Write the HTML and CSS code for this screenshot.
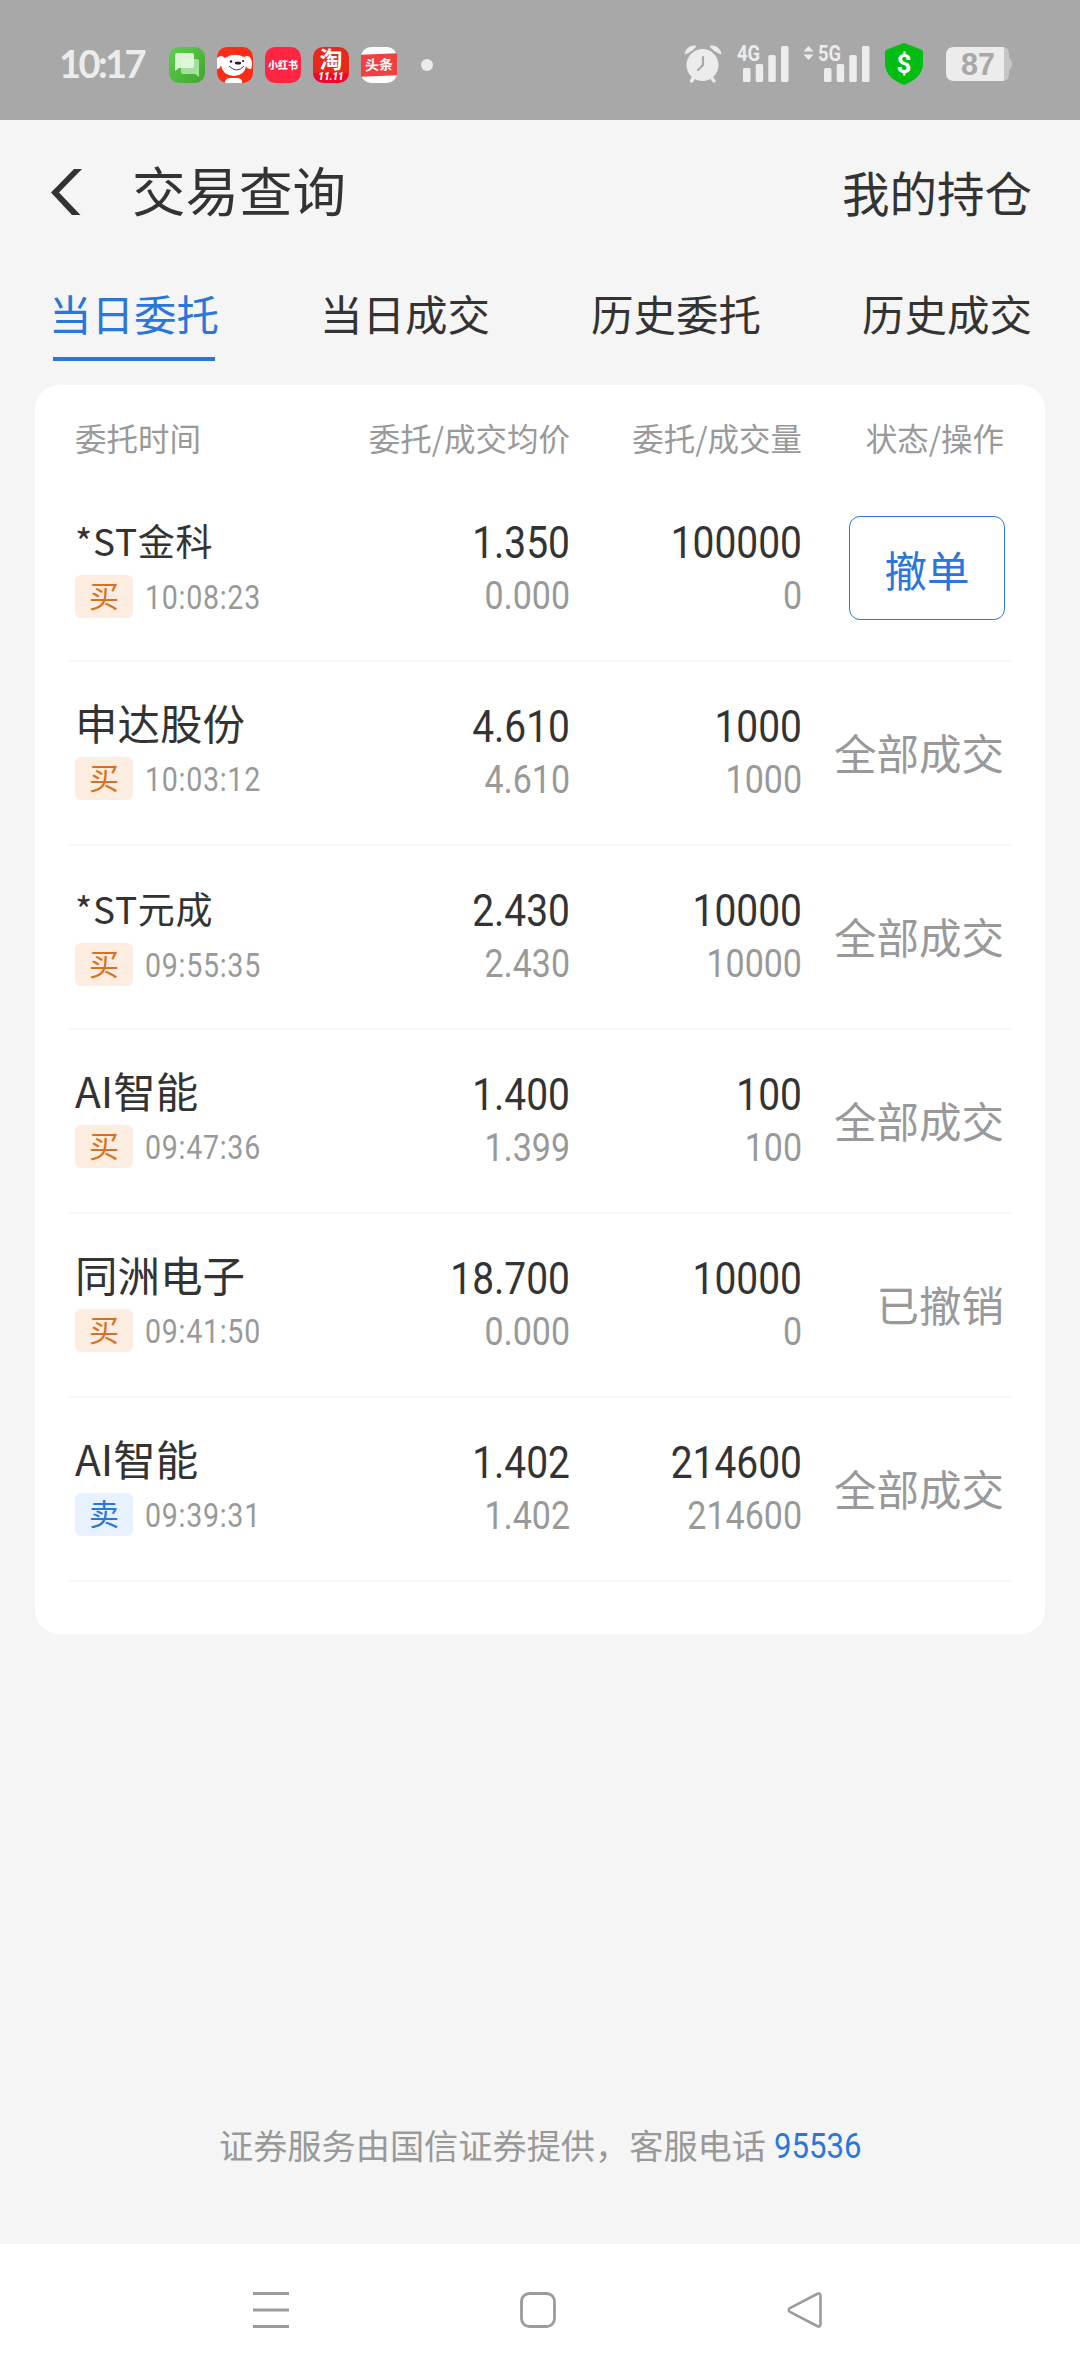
FILE: index.html
```html
<!DOCTYPE html>
<html lang="zh-CN">
<head>
    <meta charset="UTF-8">
    <meta name="viewport" content="width=device-width, initial-scale=1.0">
    <title>交易查询</title>
    <link rel="stylesheet" href="styles.css">
</head>
<body>

    <div class="status-bar">
        <span class="clock">10:17</span>
        <div class="apps">
            <!-- messages -->
            <svg width="36" height="36" viewBox="0 0 36 36">
                <defs>
                    <linearGradient id="msg" x1="0" y1="0" x2="1" y2="1">
                        <stop offset="0" stop-color="#5fd050"/>
                        <stop offset="1" stop-color="#3fa52c"/>
                    </linearGradient>
                </defs>
                <rect width="36" height="36" rx="10" fill="url(#msg)"/>
                <path d="M14 12h14q2 0 2 2v16l-4-3H14q-2 0-2-2V14q0-2 2-2z" fill="#a5df9d"/>
                <path d="M8 6h15q2 0 2 2v11q0 2-2 2H10l-4 3V8q0-2 2-2z" fill="#e2f8df" fill-opacity=".93"/>
            </svg>
            <!-- dog -->
            <svg width="36" height="36" viewBox="0 0 36 36">
                <rect width="36" height="36" rx="10" fill="#fc2c17"/>
                <path d="M0 11Q4 7 8 11Q17 5 27 10Q32 7 34 12Q36 17 34 22Q30 22 29 19Q28 28 17 29Q5 28 4 18Q3 22 0 22z" fill="#fff"/>
                <path d="M8 36Q8 31 13 31H21Q26 32 25 36z" fill="#fff"/>
                <ellipse cx="21" cy="16" rx="3.2" ry="1.5" fill="#222"/>
                <circle cx="14" cy="14.5" r="1.3" fill="#222"/>
                <circle cx="26" cy="14" r="1.1" fill="#222"/>
                <path d="M12 19Q20 27 27 19" fill="none" stroke="#333" stroke-width=".9"/>
            </svg>
            <div class="app app-red">小红书</div>
            <div class="app app-tao"><span class="tao">淘</span><span class="sale">11.11</span></div>
            <div class="app app-news"><span>头条</span></div>
        </div>
        <span class="dot"></span>

        <div class="indicators">
            <!-- alarm -->
            <svg class="alarm" width="38" height="40" viewBox="0 0 38 40">
                <g stroke="#ececec" stroke-width="3.4" stroke-linecap="round">
                    <path d="M10 33L7.5 37M27 33L30 37"/>
                </g>
                <path d="M1 10Q3 1 12 2Q10 6 1 10zM37 10Q35 1 26 2Q28 6 37 10z" fill="#ececec" stroke="#ececec" stroke-linejoin="round"/>
                <circle cx="18.5" cy="21" r="16" fill="#ececec"/>
                <path d="M19 13V21L14 26" fill="none" stroke="#a8a8a8" stroke-width="2.2" stroke-linecap="round"/>
            </svg>
            <svg class="signal" width="52" height="40" viewBox="0 0 52 40">
                <text x="0" y="17" class="net" textLength="23" lengthAdjust="spacingAndGlyphs">4G</text>
                <g fill="#ececec">
                    <rect x="6" y="24" width="7.5" height="14" rx="1.5"/>
                    <rect x="18.7" y="20" width="7.5" height="18" rx="1.5"/>
                    <rect x="31.3" y="11" width="7.5" height="27" rx="1.5"/>
                    <rect x="44" y="2" width="7.5" height="36" rx="1.5"/>
                </g>
            </svg>
            <svg class="signal-data" width="68" height="40" viewBox="0 0 68 40">
                <path d="M5.5 2L10.5 7.5H.5zM5.5 16L.5 10.5H10.5z" fill="#ececec"/>
                <text x="15" y="17" class="net" textLength="23" lengthAdjust="spacingAndGlyphs">5G</text>
                <g fill="#ececec">
                    <rect x="21" y="24" width="7.5" height="14" rx="1.5"/>
                    <rect x="33.7" y="20" width="7.5" height="18" rx="1.5"/>
                    <rect x="46.3" y="11" width="7.5" height="27" rx="1.5"/>
                    <rect x="59" y="2" width="7.5" height="36" rx="1.5"/>
                </g>
            </svg>
            <svg class="shield" width="38" height="42" viewBox="0 0 38 42">
                <path d="M19 0L36 6.5Q38 7.2 38 9V22Q37 35 19 42Q1 35 0 22V9Q0 7.2 2 6.5z" fill="#03bd13"/>
                <text x="19" y="30" class="dollar" text-anchor="middle">$</text>
            </svg>
            <svg width="66" height="34" viewBox="0 0 66 34">
                <path d="M56 0Q63 0 63 7V11Q66 12 66 17Q66 22 63 23V27Q63 34 56 34z" fill="#c6c6c6"/>
                <path d="M8 0H58V34H8Q0 34 0 26V8Q0 0 8 0z" fill="#ececec"/>
                <text x="15" y="28" class="battery" textLength="34" lengthAdjust="spacingAndGlyphs">87</text>
            </svg>
        </div>
    </div>

    <div class="header">
        <svg class="back" width="32" height="48" viewBox="0 0 32 48">
            <path d="M24 1H32L9 24.5L30.5 47H22L1 24.5z" fill="#333"/>
        </svg>
        <h1>交易查询</h1>
        <span class="holdings">我的持仓</span>
    </div>

    <div class="tabs">
        <div class="tab active">当日委托</div>
        <div class="tab">当日成交</div>
        <div class="tab">历史委托</div>
        <div class="tab">历史成交</div>
    </div>

    <div class="card">
        <div class="row head">
            <span>委托时间</span>
            <span>委托/成交均价</span>
            <span>委托/成交量</span>
            <span>状态/操作</span>
        </div>

        <div class="row">
            <div class="stock small">
                <div class="name">*ST金科</div>
                <div class="info"><span class="tag buy">买</span><span class="time">10:08:23</span></div>
            </div>
            <div class="nums"><div class="num">1.350</div><div class="num sub">0.000</div></div>
            <div class="nums"><div class="num">100000</div><div class="num sub">0</div></div>
            <div class="state"><button class="cancel">撤单</button></div>
        </div>

        <div class="row">
            <div class="stock">
                <div class="name">申达股份</div>
                <div class="info"><span class="tag buy">买</span><span class="time">10:03:12</span></div>
            </div>
            <div class="nums"><div class="num">4.610</div><div class="num sub">4.610</div></div>
            <div class="nums"><div class="num">1000</div><div class="num sub">1000</div></div>
            <div class="state">全部成交</div>
        </div>

        <div class="row">
            <div class="stock small">
                <div class="name">*ST元成</div>
                <div class="info"><span class="tag buy">买</span><span class="time">09:55:35</span></div>
            </div>
            <div class="nums"><div class="num">2.430</div><div class="num sub">2.430</div></div>
            <div class="nums"><div class="num">10000</div><div class="num sub">10000</div></div>
            <div class="state">全部成交</div>
        </div>

        <div class="row">
            <div class="stock">
                <div class="name">AI智能</div>
                <div class="info"><span class="tag buy">买</span><span class="time">09:47:36</span></div>
            </div>
            <div class="nums"><div class="num">1.400</div><div class="num sub">1.399</div></div>
            <div class="nums"><div class="num">100</div><div class="num sub">100</div></div>
            <div class="state">全部成交</div>
        </div>

        <div class="row">
            <div class="stock">
                <div class="name">同洲电子</div>
                <div class="info"><span class="tag buy">买</span><span class="time">09:41:50</span></div>
            </div>
            <div class="nums"><div class="num">18.700</div><div class="num sub">0.000</div></div>
            <div class="nums"><div class="num">10000</div><div class="num sub">0</div></div>
            <div class="state">已撤销</div>
        </div>

        <div class="row">
            <div class="stock">
                <div class="name">AI智能</div>
                <div class="info"><span class="tag sell">卖</span><span class="time">09:39:31</span></div>
            </div>
            <div class="nums"><div class="num">1.402</div><div class="num sub">1.402</div></div>
            <div class="nums"><div class="num">214600</div><div class="num sub">214600</div></div>
            <div class="state">全部成交</div>
        </div>
    </div>

    <div class="service">
        <span>证券服务由国信证券提供，客服电话</span>
        <span class="phone">95536</span>
    </div>

    <div class="nav-bar">
        <svg width="36" height="36" viewBox="0 0 36 36">
            <path d="M0 1.5H36M0 18H36M0 34.5H36" stroke="#9b9b9b" stroke-width="3"/>
        </svg>
        <svg width="36" height="36" viewBox="0 0 36 36">
            <rect x="1.5" y="1.5" width="33" height="33" rx="8" fill="none" stroke="#9b9b9b" stroke-width="2.8"/>
        </svg>
        <svg width="36" height="36" viewBox="0 0 36 36">
            <path d="M30 2Q33.5 .5 33.5 4V32Q33.5 35.5 30 34L3 20Q.5 18 3 16z" fill="none" stroke="#9b9b9b" stroke-width="2.6"/>
        </svg>
    </div>

</body>
</html>
```

FILE: styles.css
```css
* {
    box-sizing: border-box;
}

body {
    margin: 0;
    width: 1080px;
    height: 2376px;
    display: flex;
    flex-direction: column;
    background-color: #f5f5f5;
    color: #333;
    font-family: "Noto Sans CJK SC", sans-serif;
}

svg {
    display: block;
    flex-shrink: 0;
    overflow: visible;
}

/* system status bar */
.status-bar {
    display: flex;
    align-items: center;
    height: 120px;
    padding: 10px 68px 0 59px;
    background-color: #a8a8a8;
}

.clock {
    width: 110px;
    margin-top: -4px;
    color: #ececec;
    font-family: Lato, sans-serif;
    font-size: 38px;
    font-weight: bold;
    letter-spacing: -2.6px;
}

.apps {
    display: flex;
    gap: 12px;
}

.app {
    width: 36px;
    height: 36px;
    border-radius: 10px;
    color: #fff;
    text-align: center;
    white-space: nowrap;
}

.app-red {
    background-color: #ff2442;
    font-size: 10px;
    font-weight: 900;
    line-height: 35px;
}

.app-tao {
    display: flex;
    flex-direction: column;
    background: linear-gradient(#e8281a 72%, #f0062e 72%);
}

.tao {
    height: 25px;
    font-size: 23px;
    font-weight: bold;
    line-height: 22px;
}

.sale {
    font-family: Roboto, sans-serif;
    font-size: 10px;
    font-style: italic;
    font-weight: 900;
    line-height: 12px;
}

.app-news {
    padding-top: 7px;
    background-color: #fff;
}

.app-news span {
    display: block;
    height: 22px;
    background-color: #f04142;
    font-size: 14px;
    font-weight: bold;
    line-height: 21px;
    transform: skewY(-2deg);
}

.dot {
    width: 12px;
    height: 12px;
    margin-left: 24px;
    border-radius: 50%;
    background-color: #ececec;
}

.indicators {
    display: flex;
    align-items: center;
    margin-top: -2px;
    margin-left: auto;
}

.signal {
    margin-left: 15px;
}

.signal-data {
    margin-left: 14px;
}

.shield {
    margin: 0 23px 0 14px;
}

.net {
    fill: #ececec;
    font-family: Roboto, sans-serif;
    font-size: 22px;
    font-weight: bold;
}

.dollar {
    fill: #fff;
    font-family: Roboto, sans-serif;
    font-size: 26px;
    font-weight: bold;
}

.battery {
    fill: #a8a8a8;
    font-family: "Liberation Sans", sans-serif;
    font-size: 32px;
    font-weight: bold;
}

/* page header */
.header {
    display: flex;
    align-items: center;
    height: 144px;
    padding: 0 48px 0 50px;
}

h1 {
    margin: -8px 0 0 50px;
    font-size: 53.5px;
    font-weight: normal;
}

.holdings {
    margin: -2px 0 0 auto;
    font-size: 47.5px;
}

.tabs {
    display: flex;
    justify-content: space-between;
    height: 121px;
    padding: 0 48px 0 49px;
}

.tab {
    height: 97px;
    padding-top: 16px;
    font-size: 42.5px;
    line-height: 66px;
}

.active {
    display: flex;
    flex-direction: column;
    align-items: center;
    justify-content: space-between;
    color: #2a76d9;
}

.active::after {
    content: "";
    width: 162px;
    height: 4px;
    background-color: #2a76d9;
}

/* orders */
.card {
    width: 1010px;
    height: 1249px;
    margin: 0 auto;
    padding: 0 34px;
    border-radius: 24px;
    background-color: #fff;
}

.row {
    display: grid;
    grid-template-columns: 253px 242px 232px 202px;
    height: 184px;
    padding: 0 7px 0 6px;
    border-bottom: 2px solid #f7f7f7;
}

.head {
    height: 93px;
    border-bottom: none;
    color: #999;
    font-size: 31.5px;
    line-height: 105px;
    text-align: right;
}

.head span:first-child {
    text-align: left;
}

.stock {
    padding-top: 35px;
}

.name {
    height: 60px;
    font-size: 42.5px;
    line-height: 50px;
    white-space: nowrap;
}

.small {
    padding-top: 37px;
}

.small .name {
    font-size: 37px;
    letter-spacing: 0.7px;
}

.info {
    display: flex;
    align-items: center;
    gap: 12px;
}

.tag {
    width: 58px;
    height: 43px;
    border-radius: 6px;
    font-size: 30px;
    line-height: 39px;
    text-align: center;
}

.buy {
    background-color: #fdece0;
    color: #d9701f;
}

.sell {
    background-color: #e7f1ff;
    color: #2a76d9;
}

.time {
    padding-top: 2px;
    color: #999;
    font-family: Roboto, sans-serif;
    font-size: 32.5px;
    letter-spacing: 0.8px;
    transform: scaleX(0.88);
    transform-origin: left;
}

.nums {
    padding-top: 39px;
}

.num {
    font-family: Roboto, sans-serif;
    font-size: 43.5px;
    line-height: 53px;
    text-align: right;
    transform: scaleX(0.895);
    transform-origin: right;
}

.sub {
    color: #999;
    font-size: 38px;
}

.state {
    display: flex;
    align-items: center;
    justify-content: flex-end;
    padding-bottom: 3px;
    color: #999;
    font-size: 42.5px;
    white-space: nowrap;
}

.cancel {
    width: 156px;
    height: 104px;
    margin: 0 -1px 0 0;
    padding: 2px 0 0;
    border: 1px solid #2a76d9;
    border-radius: 11px;
    background-color: #fff;
    color: #2a76d9;
    font-family: inherit;
    font-size: 42.5px;
}

/* footer */
.service {
    display: flex;
    align-items: center;
    justify-content: center;
    gap: 8px;
    height: 60px;
    margin-top: auto;
    margin-bottom: 70px;
    color: #999;
    font-size: 34.2px;
}

.phone {
    margin-right: -9px;
    padding-top: 3px;
    color: #2a76d9;
    font-family: Roboto, sans-serif;
    transform: scaleX(0.91);
    transform-origin: left;
}

.nav-bar {
    display: flex;
    align-items: center;
    justify-content: space-between;
    height: 132px;
    padding: 0 257px 0 253px;
    background-color: #fff;
}
```
